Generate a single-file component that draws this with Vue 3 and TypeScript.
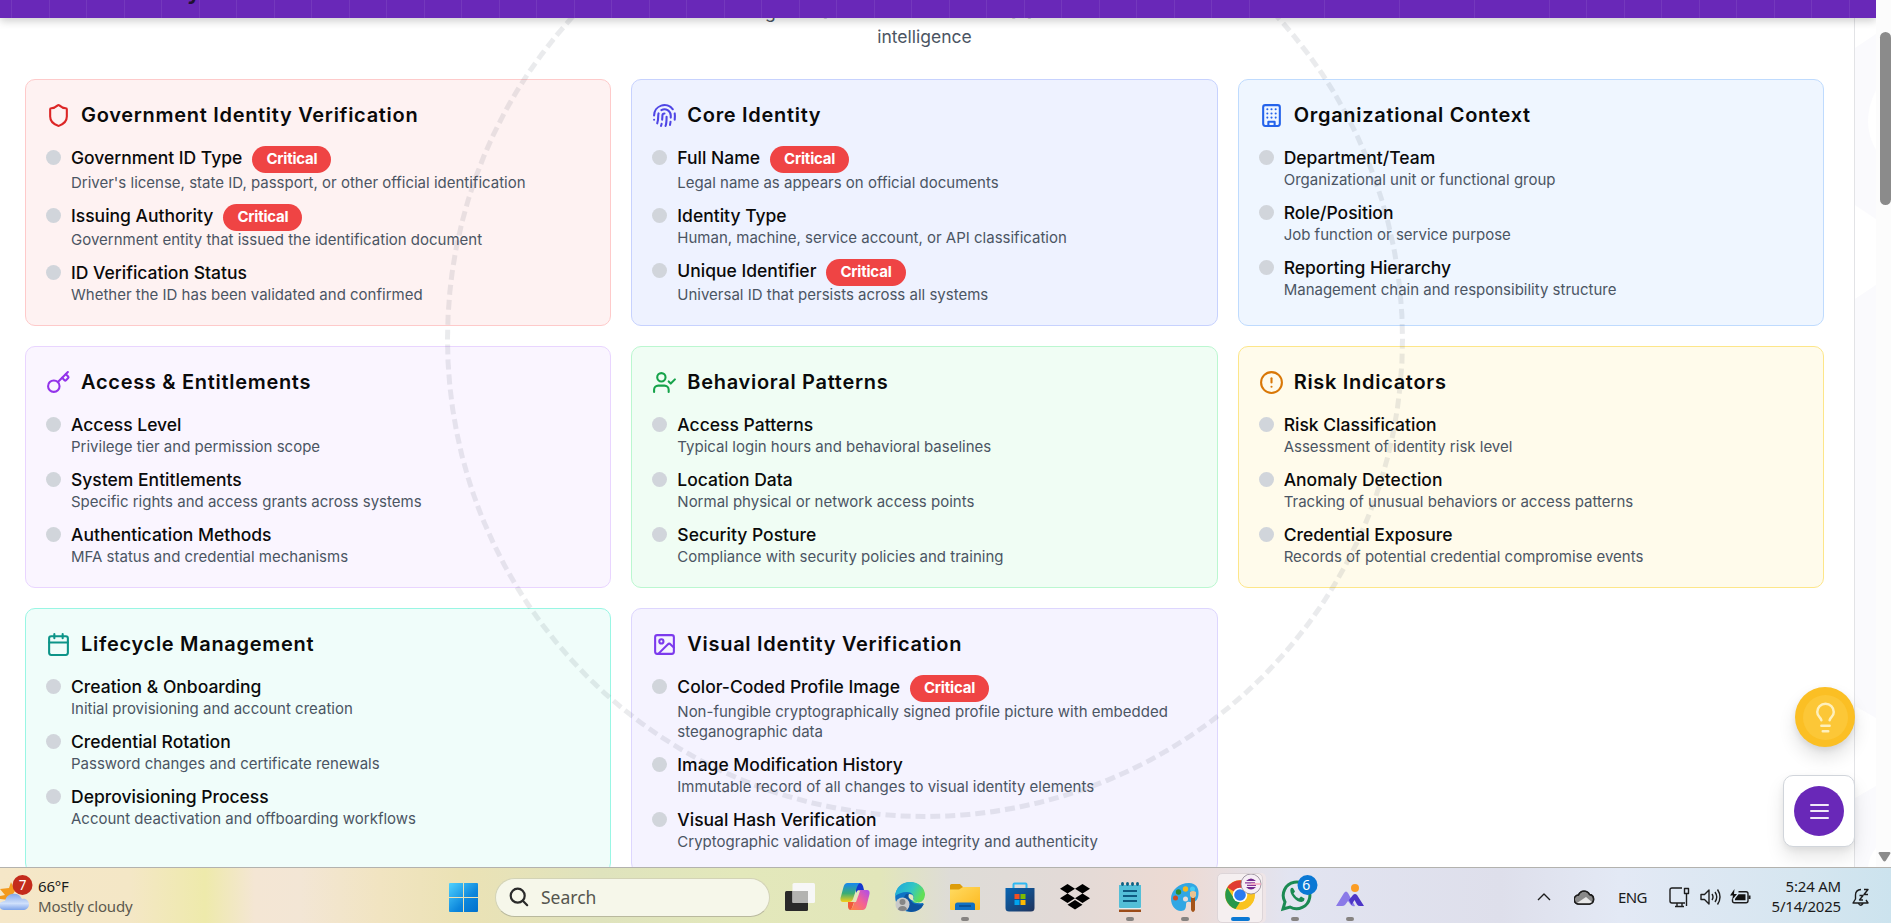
<script setup lang="ts">
interface Item { name: string; desc: string; critical?: boolean }
interface Card { key: string; title: string; icon: string[]; items: Item[] }

const circle = (cx: number, cy: number, r: number) =>
  `M${cx - r} ${cy}a${r} ${r} 0 1 0 ${2 * r} 0a${r} ${r} 0 1 0 ${-2 * r} 0`

const cards: Card[] = [
  {
    key: 'red', title: 'Government Identity Verification',
    icon: ['M20 13c0 5-3.5 7.5-7.66 8.95a1 1 0 0 1-.67-.01C7.5 20.5 4 18 4 13V6a1 1 0 0 1 1-1c2 0 4.5-1.2 6.24-2.72a1.17 1.17 0 0 1 1.52 0C14.51 3.81 17 5 19 5a1 1 0 0 1 1 1z'],
    items: [
      { name: 'Government ID Type', desc: "Driver's license, state ID, passport, or other official identification", critical: true },
      { name: 'Issuing Authority', desc: 'Government entity that issued the identification document', critical: true },
      { name: 'ID Verification Status', desc: 'Whether the ID has been validated and confirmed' },
    ],
  },
  {
    key: 'indigo', title: 'Core Identity',
    icon: [
      'M12 10a2 2 0 0 0-2 2c0 1.02-.1 2.51-.26 4', 'M14 13.12c0 2.38 0 6.38-1 8.88', 'M17.29 21.02c.12-.6.43-2.3.5-3.02',
      'M2 12a10 10 0 0 1 18-6', 'M2 16h.01', 'M21.8 16c.2-2 .131-5.354 0-6', 'M5 19.5C5.5 18 6 15 6 12a6 6 0 0 1 .34-2',
      'M8.65 22c.21-.66.45-1.32.57-2', 'M9 6.8a6 6 0 0 1 9 5.2v2',
    ],
    items: [
      { name: 'Full Name', desc: 'Legal name as appears on official documents', critical: true },
      { name: 'Identity Type', desc: 'Human, machine, service account, or API classification' },
      { name: 'Unique Identifier', desc: 'Universal ID that persists across all systems', critical: true },
    ],
  },
  {
    key: 'blue', title: 'Organizational Context',
    icon: [
      'M6 2h12a2 2 0 0 1 2 2v16a2 2 0 0 1-2 2H6a2 2 0 0 1-2-2V4a2 2 0 0 1 2-2z', 'M9 22v-4h6v4',
      'M8 6h.01', 'M16 6h.01', 'M12 6h.01', 'M12 10h.01', 'M12 14h.01', 'M16 10h.01', 'M16 14h.01', 'M8 10h.01', 'M8 14h.01',
    ],
    items: [
      { name: 'Department/Team', desc: 'Organizational unit or functional group' },
      { name: 'Role/Position', desc: 'Job function or service purpose' },
      { name: 'Reporting Hierarchy', desc: 'Management chain and responsibility structure' },
    ],
  },
  {
    key: 'purple', title: 'Access & Entitlements',
    icon: ['m15.5 7.5 2.3 2.3a1 1 0 0 0 1.4 0l2.1-2.1a1 1 0 0 0 0-1.4L19 4', 'm21 2-9.6 9.6', circle(7.5, 15.5, 5.5)],
    items: [
      { name: 'Access Level', desc: 'Privilege tier and permission scope' },
      { name: 'System Entitlements', desc: 'Specific rights and access grants across systems' },
      { name: 'Authentication Methods', desc: 'MFA status and credential mechanisms' },
    ],
  },
  {
    key: 'green', title: 'Behavioral Patterns',
    icon: ['M16 21v-2a4 4 0 0 0-4-4H6a4 4 0 0 0-4 4v2', circle(9, 7, 4), 'm16 11 2 2 4-4'],
    items: [
      { name: 'Access Patterns', desc: 'Typical login hours and behavioral baselines' },
      { name: 'Location Data', desc: 'Normal physical or network access points' },
      { name: 'Security Posture', desc: 'Compliance with security policies and training' },
    ],
  },
  {
    key: 'amber', title: 'Risk Indicators',
    icon: [circle(12, 12, 10), 'M12 8v4', 'M12 16h.01'],
    items: [
      { name: 'Risk Classification', desc: 'Assessment of identity risk level' },
      { name: 'Anomaly Detection', desc: 'Tracking of unusual behaviors or access patterns' },
      { name: 'Credential Exposure', desc: 'Records of potential credential compromise events' },
    ],
  },
  {
    key: 'teal', title: 'Lifecycle Management',
    icon: ['M8 2v4', 'M16 2v4', 'M5 4h14a2 2 0 0 1 2 2v14a2 2 0 0 1-2 2H5a2 2 0 0 1-2-2V6a2 2 0 0 1 2-2z', 'M3 10h18'],
    items: [
      { name: 'Creation & Onboarding', desc: 'Initial provisioning and account creation' },
      { name: 'Credential Rotation', desc: 'Password changes and certificate renewals' },
      { name: 'Deprovisioning Process', desc: 'Account deactivation and offboarding workflows' },
    ],
  },
  {
    key: 'violet', title: 'Visual Identity Verification',
    icon: ['M5 3h14a2 2 0 0 1 2 2v14a2 2 0 0 1-2 2H5a2 2 0 0 1-2-2V5a2 2 0 0 1 2-2z', circle(9, 9, 2), 'm21 15-3.086-3.086a2 2 0 0 0-2.828 0L6 21'],
    items: [
      { name: 'Color-Coded Profile Image', desc: 'Non-fungible cryptographically signed profile picture with embedded steganographic data', critical: true },
      { name: 'Image Modification History', desc: 'Immutable record of all changes to visual identity elements' },
      { name: 'Visual Hash Verification', desc: 'Cryptographic validation of image integrity and authenticity' },
    ],
  },
]
</script>

<template>
  <div class="screen">
    <div class="viewport">
      <main class="page">
        <p class="intro">core intelligence and trusted business data resources drive<br>intelligence</p>
        <div class="grid">
          <section v-for="c in cards" :key="c.key" class="card" :class="c.key">
            <header class="card-head">
              <svg class="card-icon" viewBox="0 0 24 24"><path v-for="d in c.icon" :key="d" :d="d" /></svg>
              <h3>{{ c.title }}</h3>
            </header>
            <ul class="items">
              <li v-for="i in c.items" :key="i.name">
                <span class="dot"></span>
                <div class="item-body">
                  <div class="item-name" :class="{ tall: i.critical }"><span>{{ i.name }}</span><b v-if="i.critical" class="badge">Critical</b></div>
                  <div class="item-desc">{{ i.desc }}</div>
                </div>
              </li>
            </ul>
          </section>
        </div>
      </main>
      <div class="gutter">
        <svg width="21" height="867" viewBox="0 0 21 867" fill="#ffffff">
          <path d="M0 205l21 14v66l-21 14zM21 90q-16 32 0 60zM0 706l21 12v68l-21 12zM21 848q-7 8-8 19h8zM0 18h21v16L0 48z" />
        </svg>
      </div>
      <div class="ring"></div>
      <div class="banner"><span class="banner-title">y</span></div>
      <div class="scrollbar"><div class="thumb"></div><svg class="down" width="13" height="10" viewBox="0 0 13 10"><path d="M1.5 0h10q1.500 .5.7 1.800L7.800 8.800q-1.300 1.500-2.600 0L.8 1.800Q0 .5 1.500 0z" /></svg></div>
      <button class="tip" aria-label="Tips">
        <span class="tip-inner">
          <svg viewBox="0 0 24 24"><path d="M15 14c.2-1 .7-1.700 1.500-2.500 1-.9 1.500-2.200 1.500-3.500A6 6 0 0 0 6 8c0 1 .2 2.200 1.500 3.500.7.7 1.300 1.500 1.500 2.500M9 18h6M10 22h4" /></svg>
        </span>
      </button>
      <div class="menu"><button class="menu-btn" aria-label="Menu"><i></i><i></i><i></i></button></div>
    </div>

    <footer class="taskbar">
      <div class="weather">
        <svg class="weather-icon" width="34" height="40" viewBox="0 0 34 40">
          <defs><linearGradient id="cl" x1="0" y1="0" x2="0" y2="1"><stop offset="0" stop-color="#86a9ea" /><stop offset=".6" stop-color="#cfe0fb" /><stop offset="1" stop-color="#7da3ea" /></linearGradient></defs>
          <path d="M11 8l4 9-6 9-9-1v-3l5-1-5-6 9-1z" fill="#f39a1e" />
          <path d="M4 36a5 5 0 0 1-4-2v-5c1-1 3-2 5-2a9 9 0 0 1 17-2c4-1 7 2 7 5.500S26 36 23 36z" fill="url(#cl)" />
          <circle cx="22.500" cy="11" r="10" fill="#c42b1c" />
        </svg>
        <span class="seven">7</span>
        <div class="weather-text"><span>66°F</span><span class="muted">Mostly cloudy</span></div>
      </div>

      <div class="apps">
        <svg class="start" width="29" height="29" viewBox="0 0 29 29">
          <defs><linearGradient id="win" x1="0" y1="0" x2="1" y2="1"><stop offset="0" stop-color="#4fd2ff" /><stop offset=".6" stop-color="#0c86dc" /><stop offset="1" stop-color="#0070cc" /></linearGradient></defs>
          <path d="M1 0h13v14H0V1q0-1 1-1zM15 0h13q1 0 1 1v13H15zM0 15h14v14H1q-1 0-1-1zM15 15h14v13q0 1-1 1H15z" fill="url(#win)" />
        </svg>
        <div class="search">
          <svg width="20" height="20" viewBox="0 0 20 20" fill="none" stroke="#2a2a2a" stroke-width="2.200" stroke-linecap="round"><circle cx="8.700" cy="8.700" r="7" /><path d="M13.800 13.800l4.400 4.400" /></svg>
          <span>Search</span>
        </div>
        <div class="app">
          <svg width="30" height="30" viewBox="0 0 30 30"><rect y="9" width="23" height="20" rx="1.500" fill="#292929" /><rect x="7.500" y="1" width="22.500" height="20" rx="1.500" fill="#f7f7f7" /><path d="M7.500 9H23v12H7.500z" fill="#b3b3b1" /></svg>
        </div>
        <div class="app">
          <svg width="30" height="30" viewBox="0 0 30 30">
            <defs>
              <linearGradient id="cpa" x1="0" y1="0" x2="0" y2="1"><stop offset="0" stop-color="#1687f0" /><stop offset=".55" stop-color="#3bad74" /><stop offset="1" stop-color="#f8cf16" /></linearGradient>
              <linearGradient id="cpb" x1="1" y1="0" x2="0" y2="1"><stop offset="0" stop-color="#a94cf1" /><stop offset=".5" stop-color="#f46294" /><stop offset="1" stop-color="#ff8b3a" /></linearGradient>
            </defs>
            <path d="M16 1h4q2 0 3 3l1 4h-5q-2 0-3 3z" fill="#1438cf" />
            <path d="M7.500 1H20q-2 1-3 4l-4 12q-1 3-4 3H3q-3 0-2.500-4l3-11Q4.500 1 7.500 1z" fill="url(#cpa)" />
            <path d="M22.500 28H10q2-1 3-4l4-12q1-4 4-4h6q3 0 2.500 4l-3 12q-1 4-4 4z" fill="url(#cpb)" />
            <path d="M8 20h6l-2 6q-1 2-2 2-1.500 0-2-3z" fill="#f15a3a" />
            <path d="M17.500 9h2.500l-4 11h-3z" fill="#e3e8bd" />
          </svg>
        </div>
        <div class="app">
          <svg width="30" height="30" viewBox="0 0 30 30">
            <defs>
              <linearGradient id="ega" x1="0" y1="0" x2="1" y2=".4"><stop offset="0" stop-color="#1ba5e0" /><stop offset=".6" stop-color="#32c6c4" /><stop offset="1" stop-color="#62df55" /></linearGradient>
            </defs>
            <circle cx="15" cy="15" r="14.800" fill="#0f73c4" />
            <path d="M0 14C1 5 7 0 15 0c9 0 15 6 15 13 0 5-4 8-8 8-4 0-5-2-4-3 2-3 0-8-6-8-5 0-9 2-12 4z" fill="url(#ega)" />
            <path d="M11 12q4-1 6 1-3 2-1 6 3 5 13 3-4 8-13 8-9-2-8-11 1-5 3-7z" fill="#0d539e" />
            <path d="M14 12q4 0 4.500 3-.5 3 0 4-3-1-4.500-3-1-2 0-4zM18 17q1 5 10 4l3 1-1-9q-1 7-6 7.500-4 .3-6-3.500z" fill="#e3e8bd" />
            <circle cx="7.500" cy="22.500" r="7" fill="#c9c9c9" /><circle cx="7.500" cy="20" r="3" fill="#868686" /><path d="M3 27.500q.5-3.500 4.500-3.500t4.500 3.500q-4.500 3-9 0z" fill="#868686" />
          </svg>
        </div>
        <div class="app run">
          <svg width="30" height="30" viewBox="0 0 30 30">
            <defs><linearGradient id="fo" x1="0" y1="0" x2="1" y2="1"><stop offset="0" stop-color="#ffdb62" /><stop offset="1" stop-color="#fdb81e" /></linearGradient></defs>
            <path d="M0 9V3.500Q0 2 1.500 2H10l3 3h15.500Q30 5 30 6.500V10z" fill="#dd9c0a" /><path d="M0 7.500h9L13 5h17v22q0 1-1 1H1q-1 0-1-1z" fill="url(#fo)" /><path d="M5 28v-5q0-2.500 2.500-2.500h15Q25 20.500 25 23v5z" fill="#1271c4" /><path d="M9 24h12" stroke="#0a4a8a" stroke-width="1.500" />
          </svg>
        </div>
        <div class="app">
          <svg width="30" height="30" viewBox="0 0 30 30">
            <defs><linearGradient id="ms" x1="0" y1="0" x2="1" y2="1"><stop offset="0" stop-color="#0865b4" /><stop offset="1" stop-color="#20345c" /></linearGradient></defs>
            <path d="M8.500 8V2.500q0-1 1-1h11q1 0 1 1V8" fill="none" stroke="#2fb8f2" stroke-width="2" /><path d="M.5 6h29v20q0 3.500-3.500 3.500H4Q.5 29.500.5 26z" fill="url(#ms)" />
            <path d="M9.500 12h5v5h-5z" fill="#f25022" /><path d="M15.500 12h5v5h-5z" fill="#7fba00" /><path d="M9.500 18h5v5h-5z" fill="#00a4ef" /><path d="M15.500 18h5v5h-5z" fill="#ffb900" />
          </svg>
        </div>
        <div class="app">
          <svg width="30" height="30" viewBox="0 0 30 30"><path d="M7.500 2l7.500 4.700-7.500 4.800L0 6.700zM22.500 2L30 6.700l-7.500 4.800L15 6.700zM7.500 11.500l7.500 4.800L7.500 21 0 16.300zM22.500 11.500l7.500 4.800-7.500 4.700-7.500-4.700zM15 18l7.500 4.700L15 27.500l-7.500-4.800z" fill="#000" /></svg>
        </div>
        <div class="app run">
          <svg width="30" height="30" viewBox="0 0 30 30"><path d="M4 26h22v4H4z" fill="#9c4c19" /><path d="M4 25h22v2.500H4z" fill="#e9eef0" /><path d="M4 3h22v22q0 1-1 1H5q-1 0-1-1z" fill="#54bfd8" /><path d="M8 9h14M8 14h14M8 19h14" stroke="#0f5a80" stroke-width="2" /><g fill="#0f6284"><ellipse cx="7.500" cy="2" rx="1.500" ry="2" /><ellipse cx="12.500" cy="2" rx="1.500" ry="2" /><ellipse cx="17.500" cy="2" rx="1.500" ry="2" /><ellipse cx="22.500" cy="2" rx="1.500" ry="2" /></g></svg>
        </div>
        <div class="app run">
          <svg width="30" height="30" viewBox="0 0 30 30"><path d="M19 1c7 0 10 5 9.500 11C28 20 23 21 20 20c-3-1-4 0-4 3s-1 6-5 6c-6 0-10-6-10-12C1 8 9 1 19 1z" fill="#31a7e4" /><circle cx="15.500" cy="17" r="2.500" fill="#e9dcd7" /><circle cx="15.500" cy="7" r="2.700" fill="#f4b81d" /><circle cx="8.500" cy="10" r="2.700" fill="#2d8c2c" /><circle cx="5.500" cy="16" r="2.500" fill="#d04a24" /><circle cx="22.500" cy="7" r="2.500" fill="#46cdf3" /><path d="M21 15h4v13q-2 4-4 0z" fill="#a45419" /><path d="M20 10q3-2 6 0v4l-2 2h-2l-2-2z" fill="#e8c391" /></svg>
        </div>
        <div class="app active">
          <svg width="38" height="38" viewBox="0 0 38 38">
            <g transform="translate(0 6)"><circle cx="15" cy="15" r="14.800" fill="#f9c31f" /><path d="M15 15L2.200 7.600A14.800 14.800 0 0 1 27.800 7.600z" fill="#e03c31" /><path d="M15 8h13A14.800 14.800 0 0 1 15 29.800l6-11z" fill="#f9c31f" /><path d="M2.200 7.600L9 18.500l6 3.500-4.500 7A14.800 14.800 0 0 1 2.200 7.600z" fill="#28984b" /><circle cx="15" cy="15" r="7.300" fill="#fff" /><circle cx="15" cy="15" r="5.800" fill="#2a7af0" /></g>
            <circle cx="26" cy="10" r="10" fill="#f6eef5" stroke="#8d8590" stroke-width=".8" /><path d="M21 7q5-5 10 0zM21 13q5 5 10 0z" fill="#71288e" /><path d="M20 8.800h10M22 11.300h9" stroke="#8d3798" stroke-width="1.200" /><path d="M26 10h10" stroke="#f4a7bd" stroke-width="1.500" />
          </svg>
        </div>
        <div class="app run">
          <svg width="38" height="38" viewBox="-1 -1 38 38">
            <path d="M2 34l2-7A13.300 13.300 0 1 1 9 32z" fill="none" stroke="#1b8a53" stroke-width="3" /><path d="M9.500 14q1-2 2.500-1l2 3.500-1.500 2q2 3.500 5.500 5l2-2 3.500 2q0 3-3 3.500-4 0-8-4.500-4-5-3-8.500z" fill="#1b8a53" /><circle cx="26.500" cy="10" r="10" fill="#0a78d4" />
          </svg>
          <span class="count">6</span>
        </div>
        <div class="app run">
          <svg width="30" height="30" viewBox="0 0 30 30"><circle cx="20" cy="6" r="4" fill="#fb9c24" /><path d="M1 24L9 11q2-3 4 0l7 13q-2 1-4-1l-3-4-3 4q-1 1-3 1z" fill="#8b7ae8" /><path d="M14 18l4-5q2-2 4 0l7 11h-4q-2 0-3-1.500L19.500 18l-3 5z" fill="#4d36c7" /></svg>
        </div>
      </div>

      <div class="tray">
        <svg class="t-chev" width="14" height="8" viewBox="0 0 14 8"><path d="M1 7l6-6 6 6" /></svg>
        <svg class="t-cloud" width="21" height="15" viewBox="0 0 21 15"><path d="M5 14a4.500 4.500 0 0 1-.5-9A6 6 0 0 1 15.500 4.500 4.800 4.800 0 0 1 15.500 14z" fill="#898989" /><path d="M3 13l9-6 7 6-3 1H5z" fill="#e8e8e8" stroke="none" /><path d="M5 14a4.500 4.500 0 0 1-.5-9A6 6 0 0 1 15.500 4.500 4.800 4.800 0 0 1 15.500 14z" /></svg>
        <span class="t-lang">ENG</span>
        <svg class="t-net" width="21" height="21" viewBox="0 0 21 21"><path d="M13 1H3Q1 1 1 3v11q0 2 2 2h13M6 19.500h9M8 16v3M13 16v3M15.500 1.500h4v5h-4zM17.500 7v12" /></svg>
        <svg class="t-vol" width="21" height="18" viewBox="0 0 21 18"><path d="M1 6.500h3.500L9 2v14l-4.500-4.500H1zM12 6q2 3 0 6M15 4q3.500 5 0 10M17.500 1.500q5 7.500 0 15" /></svg>
        <svg class="t-bat" width="21" height="16" viewBox="0 0 21 16"><path d="M8.500 2.700H16q2 0 2 2v7q0 2-2 2H4.500q-2 0-2-2v-1.500" /><path d="M8.500 5.200H15.500v6H5v-1.500z" fill="#111" stroke="none" /><path d="M19.500 6.500v3.500" stroke-width="2" /><path d="M4.500 0L0 6.500h3L2 11l5-6H4z" fill="#111" stroke="none" /></svg>
        <div class="clock"><span>5:24 AM</span><span>5/14/2025</span></div>
        <svg class="t-bell" width="18" height="19" viewBox="0 0 18 19"><path d="M9 1.500Q3.500 2 3.500 7v4L1 15h15l-2-3M6.500 15.500q2 3.500 4.500 0M12 1.500h4l-4 5h4M7.500 7.500h3.500l-3.500 4.500H11" /></svg>
      </div>
    </footer>
  </div>
</template>

<style>
body { margin: 0; overflow: hidden; background: #fff; }
</style>

<style scoped>
* { box-sizing: border-box; }
.screen { width: 1891px; height: 923px; display: flex; flex-direction: column; overflow: hidden; font-family: Inter, "Liberation Sans", sans-serif; color: #0a0a0a; }
.viewport { position: relative; height: 867px; flex: none; overflow: hidden; display: flex; }
.page { width: 1855px; flex: none; padding: 0 30px 0 25px; border-right: 1px solid #e2e3e6; background: #fff; }
.gutter { width: 21px; flex: none; background: #fafafd; }
.intro { margin: -1px 0 30px; text-align: center; font-size: 17.5px; line-height: 25px; color: #4b5563; }
.grid { display: grid; grid-template-columns: repeat(3, minmax(0, 1fr)); gap: 20px; }
.card { border: 1px solid; border-radius: 10px; padding: 20px; }
.card-head { display: flex; align-items: center; gap: 10px; height: 31px; margin-bottom: 15px; }
.card-icon { width: 25px; height: 25px; margin-top: -1px; fill: none; stroke: var(--accent); stroke-width: 2; stroke-linecap: round; stroke-linejoin: round; }
h3 { margin: -2px 0 0; font-size: 20px; line-height: 30px; font-weight: 600; letter-spacing: .7px; white-space: nowrap; }
.items { list-style: none; margin: 0; padding: 0; display: flex; flex-direction: column; gap: 11px; }
li { display: flex; gap: 10px; }
.dot { width: 15px; height: 15px; flex: none; margin-top: 4px; border-radius: 50%; background: #d1d5db; }
.item-name { display: flex; align-items: flex-start; gap: 10px; height: 24px; font-size: 17.500px; line-height: 24.500px; font-weight: 500; }
.item-name.tall { height: 26.600px; }
.badge { height: 27px; padding: 0 14px; border-radius: 13.500px; background: #ef4444; color: #fff; font-size: 15px; line-height: 26px; font-weight: 700; letter-spacing: -.2px; }
.item-desc { font-size: 15px; line-height: 20px; color: #4b5563; }
.red { --accent: #dc2626; background: #fef2f2; border-color: #fecaca; }
.indigo { --accent: #4f46e5; background: #eef2ff; border-color: #c7d2fe; }
.blue { --accent: #2563eb; background: #eff6ff; border-color: #bfdbfe; }
.purple { --accent: #9333ea; background: #faf5ff; border-color: #e9d5ff; }
.green { --accent: #16a34a; background: #f0fdf4; border-color: #bbf7d0; }
.amber { --accent: #d97706; background: #fffbeb; border-color: #fde68a; }
.teal { --accent: #0d9488; background: #f0fdfa; border-color: #99f6e4; }
.violet { --accent: #7c3aed; background: #f5f3ff; border-color: #ddd6fe; }

.ring { position: absolute; left: 445px; top: -141px; width: 960px; height: 960px; border: 5px dashed rgba(55, 65, 81, .1); border-radius: 50%; }
.banner { position: absolute; left: 0; top: 0; width: 1876px; height: 18px; overflow: visible; background: repeating-linear-gradient(90deg, transparent 0 36.500px, #7438bd 36.500px 37.500px) -25px 0 / 1912.500px 18px, #6928b8; box-shadow: 0 3px 8px rgba(0, 0, 0, .2); }
.banner-title { position: absolute; left: 187px; top: -23px; font-size: 24px; line-height: 28px; font-weight: 600; color: #20122f; }
.scrollbar { position: absolute; right: 0; top: 0; width: 15px; height: 867px; background: #fcfcfc; }
.thumb { position: absolute; left: 4px; top: 32px; width: 11px; height: 173px; border-radius: 5.500px; background: #8b8b8b; }
.down { position: absolute; left: 2px; top: 852px; fill: #8b8b8b; }
.tip { position: absolute; left: 1795px; top: 687px; width: 60px; height: 60px; padding: 0; border: 0; border-radius: 50%; background: #fbbf24; display: grid; place-items: center; box-shadow: 0 10px 18px rgba(0, 0, 0, .12), 0 3px 6px rgba(0, 0, 0, .08); }
.tip-inner { width: 45px; height: 45px; border-radius: 50%; background: #fcc737; display: grid; place-items: center; }
.tip-inner svg { width: 33px; height: 33px; fill: none; stroke: #fef0bd; stroke-width: 1.800; stroke-linecap: round; stroke-linejoin: round; }
.menu { position: absolute; left: 1783px; top: 775px; width: 72px; height: 72px; border: 1px solid #d1d5db; border-radius: 10px; background: #fff; display: grid; place-items: center; box-shadow: 0 10px 18px rgba(0, 0, 0, .1), 0 3px 6px rgba(0, 0, 0, .06); }
.menu-btn { width: 50px; height: 50px; padding: 0; border: 0; border-radius: 50%; background: #6928b8; display: flex; flex-direction: column; align-items: center; justify-content: center; gap: 4.500px; }
.menu-btn i { width: 19px; height: 2px; background: #f1eaf8; border-radius: 1px; }

.taskbar { position: relative; height: 56px; flex: none; display: flex; align-items: center; border-top: 1px solid #b3b2ae; font-family: "Noto Sans", "Open Sans", sans-serif; color: #1b1b1b; background: linear-gradient(90deg, #f5e7c8 0, #f4e7c6 130px, #eeeaab 205px, #f4e6d4 255px, #f3e6d5 300px, #f1e4c1 380px, #ebe2b5 460px, #dfe3bd 600px, #e3e8bb 740px, #e2e6ba 880px, #dedcd7 950px, #e2dad7 1060px, #eddad3 1180px, #e2e4f1 1290px, #dedfeb 1500px, #e3e9f5 1620px, #d6e6f0 1800px, #cce3ee 1891px); }
.weather { position: relative; display: flex; width: 449px; height: 55px; flex: none; }
.weather-icon { width: 34px; height: 40px; margin-top: 6px; flex: none; }
.seven { position: absolute; left: 12.500px; top: 7px; width: 20px; text-align: center; font-size: 13.500px; line-height: 20px; color: #fff; }
.weather-text { display: flex; flex-direction: column; margin: 8px 0 0 4px; font-size: 15px; line-height: 20px; letter-spacing: -.2px; }
.muted { color: #5c594e; }
.apps { display: flex; align-items: center; height: 55px; flex: none; }
.start { flex: none; margin-right: 17px; margin-top: 4px; }
.search { width: 275px; height: 39px; flex: none; margin: 3px 2px 0 0; padding-left: 13px; display: flex; align-items: center; gap: 12px; border: 1px solid #d3d3b6; border-bottom-color: #b9b99e; border-radius: 20px; background: #f6f7ea; font-size: 17.500px; color: #55554e; }
.app { position: relative; width: 55.100px; height: 55px; padding-top: 3px; flex: none; display: flex; justify-content: center; align-items: center; }
.app.run::after, .app.active::after { content: ""; position: absolute; bottom: 2px; left: 50%; width: 8px; height: 4px; margin-left: -4px; border-radius: 2px; background: #868381; }
.app.active::after { width: 19px; margin-left: -9.500px; background: #0a78d4; }
.app.active::before { content: ""; position: absolute; left: 4.500px; top: 5px; width: 44px; height: 48px; border: 1px solid #ddd5d8; border-radius: 5px; background: #f5eff0; box-shadow: 3px 0 0 #efe5e7; }
.app.active svg { position: relative; margin: -8px 0 0 8px; }
.app.run svg[width="38"] { margin: -8px 0 0 8px; }
.count { position: absolute; left: 28.500px; top: 7px; width: 20px; text-align: center; font-size: 14px; line-height: 20px; color: #fff; }
.tray { position: absolute; right: 2px; top: 0; width: 352px; height: 55px; display: flex; align-items: center; padding-top: 3px; }
.tray svg { flex: none; fill: none; stroke: #1d1d1d; stroke-width: 1.400; stroke-linejoin: round; }
.t-cloud { margin-left: 23px; }
.t-lang { width: 30px; margin-left: 23px; font-size: 15px; letter-spacing: -.6px; }
.t-net { margin-left: 21px; }
.t-vol { margin-left: 10px; }
.t-bat { margin-left: 9px; }
.clock { display: flex; flex-direction: column; width: 80px; margin-left: 10px; margin-top: -3px; text-align: right; font-size: 15px; line-height: 20px; letter-spacing: -.2px; }
.t-bell { margin-left: 11px; }
</style>
